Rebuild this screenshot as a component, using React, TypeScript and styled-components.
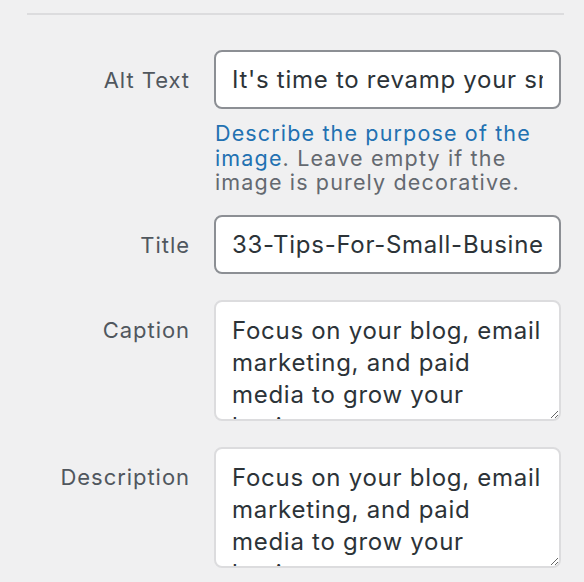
import React from 'react';
import styled, { createGlobalStyle } from 'styled-components';

const GlobalStyle = createGlobalStyle`
  html, body {
    margin: 0;
    padding: 0;
    background: #f0f0f1;
  }
  body {
    font-family: Inter, "Noto Sans", "Liberation Sans", sans-serif;
    -webkit-font-smoothing: antialiased;
  }
`;

// ─── Styled Components ────────────────────────────────────────────────────────

const Panel = styled.div`
  padding: 13px 20px 0 27px;
  box-sizing: border-box;
  width: 584px;
  height: 582px;
  overflow: hidden;
`;

const Divider = styled.hr`
  margin: 0;
  border: none;
  border-top: 2px solid #dcdcde;
`;

const Form = styled.div`
  margin-top: 35px;
  display: flex;
  flex-direction: column;
  gap: 26px;
`;

const Row = styled.div<{ multiline?: boolean }>`
  display: grid;
  grid-template-columns: 163px 347px;
  column-gap: 24px;
  align-items: ${(props) => (props.multiline ? 'start' : 'center')};
`;

const Label = styled.label<{ top?: boolean }>`
  font-size: 22px;
  line-height: 30px;
  letter-spacing: 0.95px;
  color: #50575e;
  text-align: right;
  white-space: nowrap;
  padding-top: ${(props) => (props.top ? '15px' : '1px')};
  align-self: ${(props) => (props.top ? 'start' : 'center')};
`;

const Field = styled.div`
  display: flex;
  flex-direction: column;
`;

const TextInput = styled.input`
  box-sizing: border-box;
  width: 100%;
  height: 59px;
  margin: 0;
  padding: 0 16px;
  border: 2px solid #8c8f94;
  border-radius: 8px;
  background: #fff;
  color: #2c3338;
  font-family: inherit;
  font-size: 24px;
  letter-spacing: 0.72px;
  outline: none;
`;

const TextArea = styled.textarea`
  box-sizing: border-box;
  display: block;
  width: 100%;
  height: 121px;
  margin: 0;
  padding: 13px 16px 0;
  border: 2px solid #dcdcde;
  border-radius: 8px;
  background: #fff;
  color: #2c3338;
  font-family: inherit;
  font-size: 24px;
  line-height: 32px;
  letter-spacing: 0.72px;
  overflow: hidden;
  resize: vertical;
  outline: none;
`;

const Help = styled.p`
  margin: 12px 0 0;
  padding-left: 1px;
  font-size: 21.5px;
  line-height: 24.5px;
  letter-spacing: 1.15px;
  color: #646970;
`;

const HelpLink = styled.a`
  color: #2271b1;
  text-decoration: none;
`;

const AltRow = styled(Row)`
  align-items: start;
  margin-bottom: -6px;
`;

// ─── Component ────────────────────────────────────────────────────────────────

const blurb =
  'Focus on your blog, email marketing, and paid media to grow your business.';

export default function App() {
  return (
    <>
      <GlobalStyle />
      <Panel>
        <Divider />
        <Form>
          <AltRow>
            <Label top>Alt Text</Label>
            <Field>
              <TextInput defaultValue="It's time to revamp your small business marketing strategy" />
              <Help>
                <HelpLink href="#">Describe the purpose of the image</HelpLink>. Leave
                empty if the image is purely decorative.
              </Help>
            </Field>
          </AltRow>
          <Row>
            <Label>Title</Label>
            <TextInput defaultValue="33-Tips-For-Small-Business-Marketing" />
          </Row>
          <Row multiline>
            <Label top>Caption</Label>
            <TextArea defaultValue={blurb} />
          </Row>
          <Row multiline>
            <Label top>Description</Label>
            <TextArea defaultValue={blurb} />
          </Row>
        </Form>
      </Panel>
    </>
  );
}
